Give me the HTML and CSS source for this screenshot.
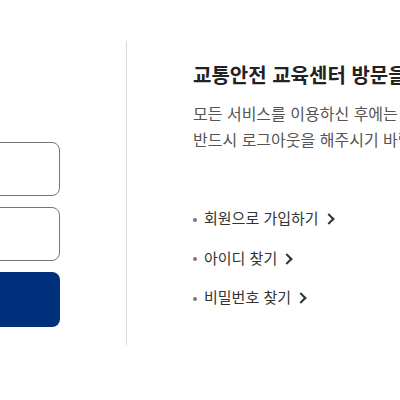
FILE: index.html
```html
<!DOCTYPE html>
<html lang="ko">
<head>
<meta charset="UTF-8">
<meta name="viewport" content="width=device-width, initial-scale=1.0">
<title>로그인</title>
<link rel="stylesheet" href="styles.css">
</head>
<body>

<div class="login-wrap">
  <div class="login-form">
    <input type="text" class="field" aria-label="아이디">
    <input type="password" class="field" aria-label="비밀번호">
    <button class="login-btn">로그인</button>
  </div>

  <div class="login-info">
    <h2 class="info-title">교통안전 교육센터 방문을 환영합니다</h2>
    <p class="info-text">모든 서비스를 이용하신 후에는<br>반드시 로그아웃을 해주시기 바랍니다.</p>
    <ul class="info-links">
      <li><a href="#">회원으로 가입하기</a></li>
      <li><a href="#">아이디 찾기</a></li>
      <li><a href="#">비밀번호 찾기</a></li>
    </ul>
  </div>
</div>

</body>
</html>
```

FILE: styles.css
```css
body {
  margin: 0;
  background: #fff;
  font-family: "Noto Sans CJK KR", "Noto Sans", sans-serif;
  color: #333;
  overflow: hidden;
}

/* Two columns, left one partly scrolled out of view */
.login-wrap {
  display: flex;
  margin-left: -340px;
  padding-top: 41px;
}

.login-form {
  flex: 0 0 400px;
  box-sizing: border-box;
  width: 400px;
  padding: 101px 0 18px 0;
  margin-right: 67px;
  display: flex;
  flex-direction: column;
  gap: 11px;
  position: relative;
}

.login-form::after {
  content: "";
  position: absolute;
  top: 0;
  bottom: 0;
  right: -67px;
  width: 1px;
  background: #d9d9d9;
}

.field {
  box-sizing: border-box;
  height: 54px;
  border: 1px solid #777;
  border-radius: 8px;
  padding: 0 16px;
  font-family: inherit;
  font-size: 16px;
}

.login-btn {
  height: 55px;
  border: none;
  border-radius: 8px;
  background: #002f7b;
  color: #fff;
  font-family: inherit;
  font-size: 18px;
}

/* Right info panel */
.login-info {
  flex: 0 0 auto;
  padding: 19px 0 0 66px;
  white-space: nowrap;
}

.info-title {
  margin: 0;
  font-size: 20px;
  line-height: 30px;
  font-weight: bold;
  color: #222;
}

.info-text {
  margin: 10px 0 0;
  font-size: 16px;
  line-height: 26px;
  color: #555;
}

.info-links {
  list-style: none;
  margin: 53px 0 0;
  padding: 0;
}

.info-links li {
  height: 39.5px;
  line-height: 26px;
  font-size: 15px;
}

.info-links li::before {
  content: "";
  display: inline-block;
  width: 4px;
  height: 4px;
  border-radius: 50%;
  background: #777;
  margin-right: 7px;
  vertical-align: middle;
}

.info-links a {
  color: #333;
  text-decoration: none;
}

.info-links a::after {
  content: "";
  display: inline-block;
  width: 6px;
  height: 6px;
  border-top: 2px solid #333;
  border-right: 2px solid #333;
  transform: rotate(45deg);
  margin-left: 6px;
  vertical-align: 1px;
}
```
